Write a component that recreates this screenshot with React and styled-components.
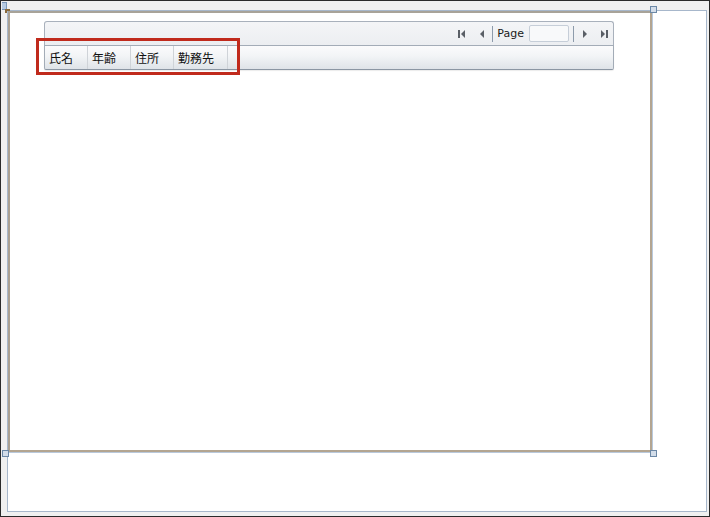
import styled, { createGlobalStyle } from 'styled-components'

const GlobalStyle = createGlobalStyle`
	html, body {
		margin: 0;
		padding: 0;
		background: #f0f0f0;
	}
	* {
		box-sizing: border-box;
	}
`

const columns = ['氏名', '年齢', '住所', '勤務先']
const columnWidths = [43, 43, 43, 54]

const Frame = styled.div`
	position: relative;
	width: 710px;
	height: 517px;
	background: #f0f0f0;
	border: 1px solid #2a2a2a;
	padding: 9px 2px 4px 6px;
	display: flex;
	font-family: 'Noto Sans CJK JP', 'DejaVu Sans', sans-serif;
`

const Window = styled.div`
	flex: 1;
	background: #ffffff;
	border: 1px solid #a7b7cb;
	display: flex;
	flex-direction: column;
	align-items: flex-start;
`

const SurfaceWrap = styled.div`
	position: relative;
	border-right: 1px solid #b9c9dc;
	border-bottom: 1px solid #b9c9dc;
`

const Surface = styled.div`
	width: 644px;
	height: 441px;
	border: 2px solid #b3a591;
	border-top-color: #a8a399;
	border-left-color: #aaa193;
	background: #ffffff;
	padding: 8px 36px 0 34px;
`

const Grid = styled.div`
	display: flex;
	flex-direction: column;
	width: 570px;
`

const Pager = styled.div`
	height: 24px;
	border: 1px solid #a9b1bc;
	border-bottom: none;
	border-radius: 3px 3px 0 0;
	background: linear-gradient(#f4f5f7, #eceef1);
	display: flex;
	align-items: center;
	justify-content: flex-end;
	padding-right: 3px;
`

const PagerButton = styled.div`
	width: 12px;
	height: 16px;
	margin-left: ${(p) => p.$gap || 0}px;
	display: flex;
	align-items: center;
	justify-content: center;
`

const Separator = styled.div`
	width: 1px;
	height: 16px;
	background: #8d9bab;
	margin: 0 ${(p) => p.$right}px 0 ${(p) => p.$left}px;
`

const PageLabel = styled.span`
	font-family: 'DejaVu Sans', Verdana, sans-serif;
	font-size: 11px;
	color: #1a1a1a;
	margin-right: 5px;
`

const PageInput = styled.div`
	width: 40px;
	height: 17px;
	border: 1px solid #c6ced8;
	border-radius: 2px;
	background: #f8f9fa;
`

const Header = styled.div`
	height: 25px;
	display: flex;
	border: 1px solid #a3acb7;
	border-bottom-color: #8b96a3;
	border-radius: 0 0 2px 2px;
	background: linear-gradient(#fbfbfc 0%, #f2f4f6 45%, #dfe3e8 100%);
	box-shadow: 0 1px 1px rgba(0, 0, 0, 0.08);
`

const HeaderCell = styled.div`
	width: ${(p) => p.$width}px;
	border-right: 1px solid #cfd3d8;
	display: flex;
	align-items: center;
	padding-left: 4px;
	font-size: 12px;
	color: #111;
`

const Highlight = styled.div`
	position: absolute;
	left: 28px;
	top: 27px;
	width: 204px;
	height: 37px;
	border: 3px solid #c02a1c;
	pointer-events: none;
`

const Handle = styled.div`
	position: absolute;
	width: 7px;
	height: 7px;
	background: #d3dde9;
	border: 1px solid #6c88a6;
	${(p) => p.$pos}
`

const CornerTab = styled.div`
	position: absolute;
	left: 1px;
	top: 1px;
	width: 5px;
	height: 8px;
	background: #b7cbe3;
	border: 1px solid #7d98b8;
	border-left: none;
`

const CornerBracket = styled.div`
	position: absolute;
	left: 4px;
	top: 8px;
	width: 5px;
	height: 4px;
	border-top: 2px solid #8a6a3a;
	border-left: 2px solid #8a6a3a;
`

const Icon = ({ type }) => {
	const fill = '#5a5f66'
	if (type === 'first')
		return (
			<svg width="10" height="10" viewBox="0 0 10 10">
				<rect x="1" y="1" width="2" height="8" fill={fill} />
				<polygon points="8,1 8,9 4,5" fill={fill} />
			</svg>
		)
	if (type === 'prev')
		return (
			<svg width="10" height="10" viewBox="0 0 10 10">
				<polygon points="7,1 7,9 3,5" fill={fill} />
			</svg>
		)
	if (type === 'next')
		return (
			<svg width="10" height="10" viewBox="0 0 10 10">
				<polygon points="3,1 3,9 7,5" fill={fill} />
			</svg>
		)
	return (
		<svg width="10" height="10" viewBox="0 0 10 10">
			<polygon points="2,1 2,9 6,5" fill={fill} />
			<rect x="7" y="1" width="2" height="8" fill={fill} />
		</svg>
	)
}

export default function App() {
	return (
		<>
			<GlobalStyle />
			<Frame>
				<CornerTab />
				<CornerBracket />
				<Window>
					<SurfaceWrap>
						<Surface>
							<Grid>
								<Pager>
									<PagerButton>
										<Icon type="first" />
									</PagerButton>
									<PagerButton $gap={8}>
										<Icon type="prev" />
									</PagerButton>
									<Separator $left={4} $right={4} />
									<PageLabel>Page</PageLabel>
									<PageInput />
									<Separator $left={4} $right={5} />
									<PagerButton>
										<Icon type="next" />
									</PagerButton>
									<PagerButton $gap={7}>
										<Icon type="last" />
									</PagerButton>
								</Pager>
								<Header>
									{columns.map((c, i) => (
										<HeaderCell key={c} $width={columnWidths[i]}>
											{c}
										</HeaderCell>
									))}
								</Header>
							</Grid>
						</Surface>
						<Highlight />
						<Handle $pos="right: -5px; top: -5px;" />
						<Handle $pos="left: -6px; bottom: -5px;" />
						<Handle $pos="right: -5px; bottom: -5px;" />
					</SurfaceWrap>
				</Window>
			</Frame>
		</>
	)
}
